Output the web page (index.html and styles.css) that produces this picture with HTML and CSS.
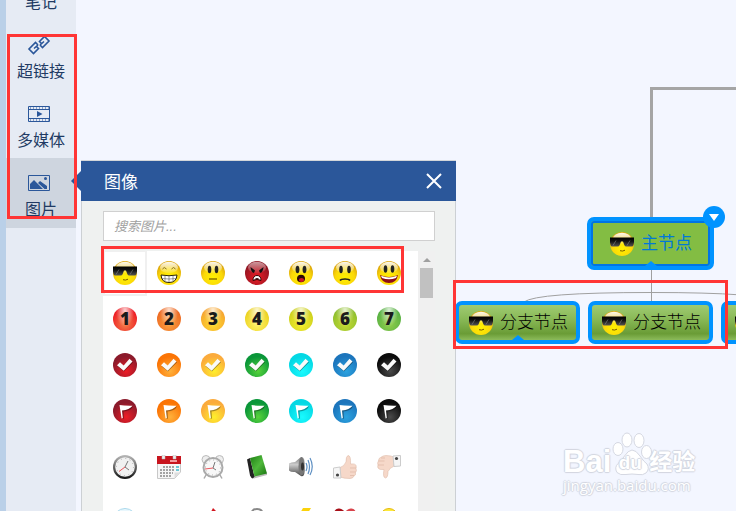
FILE: index.html
```html
<!DOCTYPE html>
<html lang="zh-CN">
<head>
  <meta charset="UTF-8">
  <title>思维导图 - 图像</title>
  <link rel="stylesheet" href="styles.css">
</head>
<body>
  <!-- shared icons -->
  <svg class="defs" aria-hidden="true">
    <defs>
      <radialGradient id="yellow" cx="50%" cy="68%" r="60%">
        <stop offset="0" stop-color="#fff200"/>
        <stop offset="0.65" stop-color="#fbd808"/>
        <stop offset="1" stop-color="#dda80e"/>
      </radialGradient>
      <radialGradient id="red" cx="50%" cy="68%" r="60%">
        <stop offset="0" stop-color="#ee1c25"/>
        <stop offset="1" stop-color="#8e1522"/>
      </radialGradient>
      <linearGradient id="shine" x1="0" y1="0" x2="0" y2="1">
        <stop offset="0" stop-color="#fff" stop-opacity="0.95"/>
        <stop offset="1" stop-color="#fff" stop-opacity="0.1"/>
      </linearGradient>
      <linearGradient id="lens" x1="0" y1="0" x2="0" y2="1">
        <stop offset="0" stop-color="#000"/>
        <stop offset="0.4" stop-color="#111"/>
        <stop offset="1" stop-color="#555"/>
      </linearGradient>
      <linearGradient id="rim" x1="0" y1="0" x2="0" y2="1">
        <stop offset="0" stop-color="#bbb"/>
        <stop offset="0.5" stop-color="#666"/>
        <stop offset="1" stop-color="#111"/>
      </linearGradient>
      <linearGradient id="cover" x1="0" y1="0" x2="1" y2="1">
        <stop offset="0" stop-color="#1c7d12"/>
        <stop offset="0.5" stop-color="#4fb93b"/>
        <stop offset="1" stop-color="#17700f"/>
      </linearGradient>
      <linearGradient id="metal" x1="0" y1="0" x2="0" y2="1">
        <stop offset="0" stop-color="#777"/>
        <stop offset="0.4" stop-color="#ccc"/>
        <stop offset="1" stop-color="#444"/>
      </linearGradient>
      <symbol id="face" viewBox="0 0 24 24">
        <circle cx="12" cy="12" r="12" fill="url(#yellow)"/>
        <ellipse cx="12" cy="6.5" rx="9" ry="5.8" fill="url(#shine)"/>
      </symbol>
      <symbol id="cool" viewBox="0 0 24 24">
        <use href="#face"/>
        <path d="M0 5.500h24v5l-.5 2.500q-.3 1.500-2 1.500h-5q-1.700 0-2.200-1.500L13 9.500h-2L9.700 13q-.5 1.500-2.200 1.500h-5q-1.700 0-2-1.500L0 10.500z" fill="url(#lens)"/>
        <path d="M3 13.500l3-5M17 13.500l3-5" stroke="#999" stroke-width="1" opacity=".5"/>
        <path d="M10 18.700q2.500 1 5-.5" fill="none" stroke="#7a5c00" stroke-width="1"/>
      </symbol>
      <symbol id="grin" viewBox="0 0 24 24">
        <use href="#face"/>
        <path d="M5.500 8q1.500-3 4 0M14.500 8q2-3 4 0" fill="none" stroke="#8a7020" stroke-width="1"/>
        <path d="M4 14q8 1.500 16 0-.5 7.500-8 7.500T4 14z" fill="#fff" stroke="#2a2305"/>
        <path d="M4.500 17.500q7.500 1 15 0M8 14.500v6M12 15v6M16 14.500v6" fill="none" stroke="#555" stroke-width=".6"/>
      </symbol>
      <symbol id="flat" viewBox="0 0 24 24">
        <use href="#face"/>
        <ellipse cx="8.500" cy="8.500" rx="1.800" ry="3.800" fill="#222"/>
        <ellipse cx="15.500" cy="8.500" rx="1.800" ry="3.800" fill="#222"/>
        <path d="M8 18h8" stroke="#6e5700" stroke-width="1.200"/>
      </symbol>
      <symbol id="angry" viewBox="0 0 24 24">
        <circle cx="12" cy="12" r="12" fill="url(#red)"/>
        <ellipse cx="12" cy="6.500" rx="9" ry="5.800" fill="url(#shine)" opacity=".6"/>
        <path d="M5.500 6l4.500 3.500-1 2.500q-3-.5-3.500-6zM18.500 6L14 9.500l1 2.500q3-.5 3.500-6z" fill="#111"/>
        <path d="M8 19.500q0-5 4-5t4 5q-4-2-8 0z" fill="#fff" stroke="#300" stroke-width="1"/>
        <path d="M9 18.500q3-3 6 0" fill="#300"/>
      </symbol>
      <symbol id="shock" viewBox="0 0 24 24">
        <use href="#face"/>
        <ellipse cx="8.500" cy="8.500" rx="1.900" ry="3.800" fill="#222"/>
        <ellipse cx="15.500" cy="8.500" rx="1.900" ry="3.800" fill="#222"/>
        <ellipse cx="12" cy="17.500" rx="4" ry="3.800" fill="#2b0a05"/>
        <ellipse cx="12.500" cy="19" rx="2.600" ry="2" fill="#d01725"/>
      </symbol>
      <symbol id="sad" viewBox="0 0 24 24">
        <use href="#face"/>
        <ellipse cx="8" cy="8.500" rx="1.800" ry="3.800" fill="#222"/>
        <ellipse cx="16" cy="8.500" rx="1.800" ry="3.800" fill="#222"/>
        <path d="M7 19.500q1-1.500 5-1.500t5 1.500" fill="none" stroke="#222" stroke-width="1.500"/>
      </symbol>
      <symbol id="happy" viewBox="0 0 24 24">
        <use href="#face"/>
        <ellipse cx="8.500" cy="8" rx="1.800" ry="3.800" fill="#222"/>
        <ellipse cx="15.500" cy="8" rx="1.800" ry="3.800" fill="#222"/>
        <path d="M3 14q9 4 18 0-1.500 8-9 8t-9-8z" fill="#8c0e18"/>
        <path d="M4 14.800q8 3.500 16 0l-1 2.200q-7 2.500-14 0z" fill="#fff"/>
      </symbol>
      <symbol id="check" viewBox="0 0 24 24">
        <path d="M4.500 13.200l3-3.200 3.500 3.300L17 6.500l3 2.800-9 9.200z" fill="#000" opacity=".35"/>
        <path d="M4 12.200l3-3 3.700 3.300 5.800-6.800 3 2.800-8.800 9.200z" fill="#fafafa"/>
      </symbol>
      <symbol id="flag" viewBox="0 0 24 24">
        <path d="M7.500 7q5 1.500 12.500.5-2.500 4.500-9.500 5l.5 7-1.200.5z" fill="#000" opacity=".35"/>
        <path d="M6.500 6q5 1 13 .8-3 4.200-10.500 4.700l.8 7.500-1.200.5z" fill="#fff"/>
      </symbol>
    </defs>
  </svg>

  <div class="app">
    <nav class="sidebar">
      <button class="tool">
        <svg width="24" height="24" viewBox="0 0 24 24"><path d="M5 3h14v18H5zM8 8h8M8 12h8" fill="none" stroke="currentColor"/></svg>
        <span>笔记</span>
      </button>
      <button class="tool">
        <svg width="24" height="24" viewBox="0 0 24 24" fill="none" stroke="currentColor" stroke-width="1.600">
          <path d="M11 12L8.500 9.500 2 16l4.500 4.500 5-5-2-2"/>
          <path d="M13 12l2.500 2.500L22 8l-4.500-4.500-5 5 2 2"/>
          <path d="M7 15.500l4-3.500M13 12l4-3.500"/>
        </svg>
        <span>超链接</span>
      </button>
      <button class="tool">
        <svg width="24" height="24" viewBox="0 0 24 24" fill="none" stroke="currentColor">
          <path d="M1.500 4.500h21v15h-21zM1 7.500h22M1 16.500h22"/>
          <path d="M3 6h19M3 18h19" stroke-dasharray="1 2"/>
          <path d="M10 9l5.500 3-5.500 3z" fill="currentColor" stroke="none"/>
        </svg>
        <span>多媒体</span>
      </button>
      <button class="tool active">
        <svg width="24" height="24" viewBox="0 0 24 24">
          <path d="M1.500 4.500h21v15h-21z" fill="none" stroke="currentColor"/>
          <path d="M3 18v-5l4-4 9 9zM11 12l2-2 7 5v3h-2.500z" fill="currentColor"/>
          <circle cx="18.500" cy="7.500" r="1.500" fill="currentColor"/>
        </svg>
        <span>图片</span>
      </button>
    </nav>

    <main class="canvas">
      <svg class="links" width="700" height="511" fill="none">
        <path d="M575.500 217V88.500H700" stroke="#a5a5a5" stroke-width="3"/>
        <path d="M575.500 268v34" stroke="#a0a0a0"/>
        <path d="M448 302Q460 292.500 575 292.500T700 302" stroke="#a0a0a0"/>
      </svg>

      <div class="node main-node">
        <svg class="face"><use href="#cool"/></svg>
        <span>主节点</span>
        <button class="toggle" aria-label="折叠"></button>
      </div>
      <div class="node branch branch-1 open">
        <svg class="face"><use href="#cool"/></svg>
        <span>分支节点</span>
      </div>
      <div class="node branch branch-2">
        <svg class="face"><use href="#cool"/></svg>
        <span>分支节点</span>
      </div>
      <div class="node branch branch-3">
        <svg class="face"><use href="#cool"/></svg>
      </div>

      <section class="panel">
        <header class="panel-header">
          <h2>图像</h2>
          <button class="close" aria-label="关闭">
            <svg width="16" height="16" viewBox="0 0 16 16"><path d="M1 1l14 14M15 1L1 15" stroke="#fff" stroke-width="2"/></svg>
          </button>
        </header>
        <div class="panel-body">
          <input type="text" class="search" placeholder="搜索图片..." aria-label="搜索图片">
          <div class="list">
            <div class="groups">
              <div class="group">
                <button class="cell selected" aria-label="墨镜"><svg class="face"><use href="#cool"/></svg></button>
                <button class="cell" aria-label="大笑"><svg class="face"><use href="#grin"/></svg></button>
                <button class="cell" aria-label="平静"><svg class="face"><use href="#flat"/></svg></button>
                <button class="cell" aria-label="生气"><svg class="face"><use href="#angry"/></svg></button>
                <button class="cell" aria-label="惊讶"><svg class="face"><use href="#shock"/></svg></button>
                <button class="cell" aria-label="难过"><svg class="face"><use href="#sad"/></svg></button>
                <button class="cell" aria-label="开心"><svg class="face"><use href="#happy"/></svg></button>

                <button class="cell"><span class="ball number n1">1</span></button>
                <button class="cell"><span class="ball number n2">2</span></button>
                <button class="cell"><span class="ball number n3">3</span></button>
                <button class="cell"><span class="ball number n4">4</span></button>
                <button class="cell"><span class="ball number n5">5</span></button>
                <button class="cell"><span class="ball number n6">6</span></button>
                <button class="cell"><span class="ball number n7">7</span></button>

                <button class="cell" aria-label="完成 红"><span class="ball crimson"><svg class="face"><use href="#check"/></svg></span></button>
                <button class="cell" aria-label="完成 橙"><span class="ball orange"><svg class="face"><use href="#check"/></svg></span></button>
                <button class="cell" aria-label="完成 黄"><span class="ball amber"><svg class="face"><use href="#check"/></svg></span></button>
                <button class="cell" aria-label="完成 绿"><span class="ball green"><svg class="face"><use href="#check"/></svg></span></button>
                <button class="cell" aria-label="完成 青"><span class="ball cyan"><svg class="face"><use href="#check"/></svg></span></button>
                <button class="cell" aria-label="完成 蓝"><span class="ball blue"><svg class="face"><use href="#check"/></svg></span></button>
                <button class="cell" aria-label="完成 黑"><span class="ball black"><svg class="face"><use href="#check"/></svg></span></button>

                <button class="cell" aria-label="旗帜 红"><span class="ball crimson"><svg class="face"><use href="#flag"/></svg></span></button>
                <button class="cell" aria-label="旗帜 橙"><span class="ball orange"><svg class="face"><use href="#flag"/></svg></span></button>
                <button class="cell" aria-label="旗帜 黄"><span class="ball amber"><svg class="face"><use href="#flag"/></svg></span></button>
                <button class="cell" aria-label="旗帜 绿"><span class="ball green"><svg class="face"><use href="#flag"/></svg></span></button>
                <button class="cell" aria-label="旗帜 青"><span class="ball cyan"><svg class="face"><use href="#flag"/></svg></span></button>
                <button class="cell" aria-label="旗帜 蓝"><span class="ball blue"><svg class="face"><use href="#flag"/></svg></span></button>
                <button class="cell" aria-label="旗帜 黑"><span class="ball black"><svg class="face"><use href="#flag"/></svg></span></button>
              </div>

              <div class="group">
                <button class="cell" aria-label="时钟">
                  <svg class="face" viewBox="0 0 24 24">
                    <circle cx="12" cy="12" r="12" fill="url(#rim)"/>
                    <circle cx="12" cy="12" r="9.800" fill="#f1f1f1"/>
                    <circle cx="12" cy="12" r="8.500" fill="none" stroke="#aaa" stroke-width="1" stroke-dasharray="1 3.450"/>
                    <path d="M15 6l-3 6 4 3" fill="none" stroke="#777"/>
                    <path d="M12 12l-6 4.500" stroke="#e8545a"/>
                  </svg>
                </button>
                <button class="cell" aria-label="日历">
                  <svg class="face" viewBox="0 0 24 24">
                    <path d="M.5 8h23v9l-6 6.500H.5z" fill="#f6f6f6" stroke="#c8c8c8"/>
                    <path d="M0 1h24v8H0z" fill="#c8151e"/>
                    <path d="M13 6h7" stroke="#f29a9e" stroke-width="2"/>
                    <path d="M5 0h3v4H5zM16 0h3v4h-3z" fill="#eee" stroke="#bbb" stroke-width=".5"/>
                    <path d="M6 12h12M3 15h15M3 18h13M3 21h11" stroke="#888" stroke-width="1.500" stroke-dasharray="2 1"/>
                    <path d="M19 12h3M19 15h3" stroke="#3fb9cb" stroke-width="1.500"/>
                    <path d="M17.500 23v-5.500H23z" fill="#ddd"/>
                  </svg>
                </button>
                <button class="cell" aria-label="闹钟">
                  <svg class="face" viewBox="0 0 24 24">
                    <path d="M5 20l-2 3.500M19 20l2 3.500" stroke="#aaa" stroke-width="1.500"/>
                    <circle cx="5" cy="4.500" r="4" fill="#eee" stroke="#bbb"/>
                    <circle cx="18.500" cy="4.500" r="4" fill="#eee" stroke="#bbb"/>
                    <circle cx="12" cy="12.500" r="9.500" fill="#f8f8f8" stroke="#aaa" stroke-width="2"/>
                    <circle cx="12" cy="12.500" r="7.500" fill="none" stroke="#aaa" stroke-dasharray="1 2.900"/>
                    <path d="M14 7l-2 6 3 2" fill="none" stroke="#777"/>
                    <path d="M12 13l-8 1" stroke="#ea5a60"/>
                  </svg>
                </button>
                <button class="cell" aria-label="书">
                  <svg class="face" viewBox="0 0 24 24">
                    <path d="M2 5l5 16 2 2.500L22 20v-2L8 20z" fill="#bcbcbc"/>
                    <path d="M2 4.500l3-1.500 4.500 18.500-1.500 2q-2-.5-3-3z" fill="#222"/>
                    <path d="M5 3l11.500-3L22 18.500 9.500 21.500z" fill="url(#cover)"/>
                  </svg>
                </button>
                <button class="cell" aria-label="喇叭">
                  <svg class="face" viewBox="0 0 24 24">
                    <path d="M0 8.500q2-1.500 6-1.500l6-5q4-1 4 10t-4 9l-6-4q-4 .5-6-1.500z" fill="url(#metal)"/>
                    <ellipse cx="12.500" cy="11.500" rx="3" ry="9" fill="#777"/>
                    <ellipse cx="13.500" cy="11.500" rx="1.500" ry="4" fill="#333"/>
                    <path d="M17 8q2 4 0 8M19 5q3 7 0 14M21 3q4.500 8.500 0 17" fill="none" stroke="#5d8fc2" stroke-width="1.200"/>
                  </svg>
                </button>
                <button class="cell" aria-label="赞">
                  <svg class="face" viewBox="0 0 24 24">
                    <path d="M7 12.500q4-1 6-5.500 0-6 2-6.500 3 0 2.500 8.500 5-.5 5.500 1.500t0 3q1 2-.5 4 .5 3-1.500 3.500-1 2.500-4 2.500-6 0-10-1.500z" fill="#f6d8c9" stroke="#dfbaa8" stroke-width=".6"/>
                    <path d="M17 13h6M17 17h5.500M17 20.500h4" stroke="#deb7a5" stroke-width=".7"/>
                    <path d="M.5 13L7 12l1 11H.5z" fill="#f6f6f6" stroke="#ccc"/>
                    <circle cx="4.500" cy="20" r="1.600" fill="#444"/>
                  </svg>
                </button>
                <button class="cell" aria-label="踩">
                  <svg class="face" viewBox="0 0 24 24">
                    <path d="M16.500 11.500q-3.500 1-5.500 5 0 6-2.500 6.500-3-.5-1.500-8.500-5 .5-6-1.500-.5-1.500 0-3-1-2 .5-4 0-3 2-3.500Q6 .5 9 .5q4.500 0 8 1.500z" fill="#f6d8c9" stroke="#dfbaa8" stroke-width=".6"/>
                    <path d="M1 10h6M1.500 6h6M4 3h4" stroke="#deb7a5" stroke-width=".7"/>
                    <path d="M16 1l7.500-.5V11L17 11.500z" fill="#f6f6f6" stroke="#ccc"/>
                    <circle cx="19.500" cy="3.500" r="1.600" fill="#444"/>
                  </svg>
                </button>
              </div>

              <div class="group last">
                <button class="cell" aria-label="地球"><svg class="face" viewBox="0 0 24 24"><circle cx="12" cy="12" r="11.500" fill="#e9f7fd" stroke="#a9d8ec"/></svg></button>
                <button class="cell" aria-label="空白"></button>
                <button class="cell" aria-label="铅笔"><svg class="face" viewBox="0 0 24 24"><path d="M12 0l5 5-12 18-4 1 1-5z" fill="#d2151f"/></svg></button>
                <button class="cell" aria-label="锁"><svg class="face" viewBox="0 0 24 24"><path d="M6.500 12V6q0-5 5.500-5t5.500 5v6" fill="none" stroke="#888" stroke-width="2"/></svg></button>
                <button class="cell" aria-label="闪电"><svg class="face" viewBox="0 0 24 24"><path d="M14 0h8l-5 8h5L6 24l5-12H7z" fill="#fbd20b"/></svg></button>
                <button class="cell" aria-label="爱心"><svg class="face" viewBox="0 0 24 24"><path d="M12 4Q9 0 5.500.5 1 1 1 6q1 8 11 16z" fill="#a70f18"/><path d="M12 4q3-4 6.500-3.500Q23 1 23 6q-1 8-11 16z" fill="#d8434b"/></svg></button>
                <button class="cell" aria-label="灯泡"><svg class="face" viewBox="0 0 24 24"><circle cx="12" cy="9" r="8.500" fill="#fdea3c" stroke="#e5b90d"/></svg></button>
              </div>
            </div>
            <div class="scrollbar">
              <div class="up"></div>
              <div class="thumb"></div>
            </div>
          </div>
        </div>
      </section>

      <div class="watermark">
        <div class="brand">
          <span class="bai">Bai</span>
          <span class="paw">
            <svg width="42" height="44" viewBox="0 0 42 44" fill="#fff" stroke="#d5d8e2">
              <ellipse cx="7" cy="17" rx="5" ry="6.500"/>
              <ellipse cx="16" cy="8" rx="5" ry="7"/>
              <ellipse cx="28" cy="8.500" rx="5" ry="7"/>
              <ellipse cx="35.500" cy="20" rx="5" ry="6.500"/>
              <path d="M21 18q4 0 8 6t7 8q3 5-1 9-3 2.500-8 1.500-6-1-12 0-6 1-9-2-3-5 1-9 3-2 6.500-7.500T21 18z"/>
            </svg>
            <span>du</span>
          </span>
          <span class="cn">经验</span>
        </div>
        <div class="url">jingyan.baidu.com</div>
      </div>
    </main>

    <!-- highlighted areas -->
    <div class="mark mark-tools"></div>
    <div class="mark mark-faces"></div>
    <div class="mark mark-nodes"></div>
  </div>
</body>
</html>
```

FILE: styles.css
```css
* {
  box-sizing: border-box;
}
body {
  margin: 0;
  overflow: hidden;
  font-family: "Liberation Sans", "Noto Sans CJK SC", sans-serif;
  font-size: 16px;
}
button {
  margin: 0;
  padding: 0;
  border: none;
  background: none;
  font-family: inherit;
  font-size: inherit;
  color: inherit;
  cursor: pointer;
}
svg {
  display: block;
}
.defs {
  position: absolute;
  width: 0;
  height: 0;
}
.app {
  position: relative;
  display: flex;
  height: 100vh;
  overflow: hidden;
}

/* left toolbar, scrolled a little */
.sidebar {
  width: 76px;
  flex-shrink: 0;
  border-left: 6px solid #bad0e8;
  background: #e6ebf4;
  display: flex;
  flex-direction: column;
  justify-content: flex-start;
}
.tool {
  height: 69px;
  flex-shrink: 0;
  display: flex;
  flex-direction: column;
  align-items: center;
  padding-top: 13px;
  gap: 3px;
  line-height: 24px;
  color: #2b579a;
}
.tool:first-child {
  margin-top: -49px;
}
.tool svg {
  margin-right: 4px;
}
.tool span {
  color: #213a63;
}
.tool.active {
  height: 70px;
  background: #ced5df;
}

.canvas {
  position: relative;
  flex: 1;
  overflow: visible;
  background: #f3f6ff;
}
.links {
  position: absolute;
  left: 0;
  top: 0;
}

/* nodes */
.face {
  width: 24px;
  height: 24px;
  flex-shrink: 0;
}
.node {
  position: absolute;
  display: flex;
  align-items: center;
  gap: 7px;
  border: 4px solid #0093ff;
  border-radius: 7px;
  font-size: 17px;
  font-weight: 300;
  line-height: 24px;
  white-space: nowrap;
}
.main-node {
  left: 511px;
  top: 217px;
  width: 127px;
  height: 53px;
  padding-left: 19px;
  background: #83bd43;
  box-shadow: inset 0 0 0 2px #0074e4;
  color: #0078d8;
  font-weight: 400;
}
.branch {
  top: 301px;
  width: 125px;
  height: 43px;
  padding-left: 10px;
  background: linear-gradient(#9fcb72, #89b957 40%, #6a9c36 82%, #8cbb5b);
  color: #000;
}
.branch-1 {
  left: 379px;
}
.branch-2 {
  left: 512px;
}
.branch-3 {
  left: 645px;
}
.main-node::after,
.open::after {
  content: "";
  position: absolute;
  left: 50%;
  bottom: 0;
  margin-left: -6px;
  border: 6px solid transparent;
  border-top: none;
  border-bottom: 5px solid #0093ff;
}
.toggle {
  position: absolute;
  right: -15px;
  top: -15px;
  width: 22px;
  height: 22px;
  border-radius: 50%;
  background: #0093ff;
  display: flex;
  align-items: center;
  justify-content: center;
}
.toggle::after {
  content: "";
  border: 5px solid transparent;
  border-top: 7px solid #fff;
  border-bottom: none;
}

/* image panel */
.panel {
  position: absolute;
  left: 5px;
  top: 160px;
  bottom: 0;
  width: 375px;
  display: flex;
  flex-direction: column;
  border-top: 1px solid #d3d6da;
}
.panel-header {
  position: relative;
  height: 40px;
  flex-shrink: 0;
  display: flex;
  align-items: center;
  justify-content: space-between;
  padding: 0 14px 1px 23px;
  background: #2b579a;
  color: #fff;
}
.panel-header::before {
  content: "";
  position: absolute;
  left: -10px;
  top: 10px;
  border: 10px solid transparent;
  border-left: none;
  border-right-color: #2b579a;
}
.panel-header h2 {
  margin: 0;
  font-size: 17px;
  font-weight: 400;
}
.panel-body {
  flex: 1;
  min-height: 0;
  display: flex;
  flex-direction: column;
  gap: 10px;
  padding: 10px 20px 0 21px;
  border: 1px solid #ccd0d4;
  border-width: 0 1px;
  background: #eff1f0;
}
.search {
  width: 100%;
  height: 30px;
  flex-shrink: 0;
  padding: 0 10px;
  border: 1px solid #d0d0d0;
  background: #fff;
  font-family: inherit;
  font-size: 13px;
  font-style: italic;
}
.search::placeholder {
  color: #a0a0a0;
}
.list {
  flex: 1;
  min-height: 0;
  display: flex;
  overflow: hidden;
}
.groups {
  flex: 1;
  background: #fff;
}
.group {
  display: grid;
  grid-template-columns: repeat(7, 44px);
  grid-auto-rows: 46px;
  margin-bottom: 11px;
  margin-top: -1px;
}
.group.last {
  margin-top: -4px;
}
.cell {
  display: flex;
  align-items: center;
  justify-content: center;
}
.cell.selected {
  border: 2px solid #f0f0f0;
}

/* round badges */
.ball {
  width: 24px;
  height: 24px;
  border-radius: 50%;
  display: block;
}
.number {
  font-family: "Open Sans", "Liberation Sans", sans-serif;
  font-size: 17px;
  font-weight: 800;
  line-height: 24px;
  text-align: center;
  color: #1b1b1b;
}
.n1 {
  background: radial-gradient(ellipse at 50% 15%, #fffc, #fff0 55%), radial-gradient(circle at 50% 70%, #f4824a, #ed1c24 70%);
}
.n2 {
  background: radial-gradient(ellipse at 50% 15%, #fffc, #fff0 55%), radial-gradient(circle at 50% 70%, #fba33f, #ee6a23 70%);
}
.n3 {
  background: radial-gradient(ellipse at 50% 15%, #fffc, #fff0 55%), radial-gradient(circle at 50% 70%, #ffe02f, #f6a52f 70%);
}
.n4 {
  background: radial-gradient(ellipse at 50% 15%, #fffc, #fff0 55%), radial-gradient(circle at 50% 70%, #fff36b, #ecd21f 70%);
}
.n5 {
  background: radial-gradient(ellipse at 50% 15%, #fffc, #fff0 55%), radial-gradient(circle at 50% 70%, #f8ef2c, #cdd11f 70%);
}
.n6 {
  background: radial-gradient(ellipse at 50% 15%, #fffc, #fff0 55%), radial-gradient(circle at 50% 70%, #c8dc33, #8fbf2f 70%);
}
.n7 {
  background: radial-gradient(ellipse at 50% 15%, #fffc, #fff0 55%), radial-gradient(circle at 50% 70%, #93cf4c, #58b144 70%);
}
.crimson {
  background: radial-gradient(circle at 55% 75%, #ee1c25, #8b1a2b 65%);
}
.orange {
  background: radial-gradient(circle at 55% 75%, #ffb13b, #fb7405 65%);
}
.amber {
  background: radial-gradient(circle at 55% 75%, #fff02b, #fbab3c 65%);
}
.green {
  background: radial-gradient(circle at 55% 75%, #57d33b, #0a9639 65%);
}
.cyan {
  background: radial-gradient(circle at 55% 75%, #19fbff, #04d8e4 65%);
}
.blue {
  background: radial-gradient(circle at 55% 75%, #2ba3e0, #1c75bc 65%);
}
.black {
  background: radial-gradient(circle at 55% 75%, #4a4a4a, #0b0b0b 65%);
}

.scrollbar {
  width: 17px;
  padding: 7px 2px 0;
  display: flex;
  flex-direction: column;
  align-items: center;
  gap: 6px;
  background: #f0f0f0;
}
.up {
  border: 4px solid transparent;
  border-top: none;
  border-bottom-color: #a0a0a0;
}
.thumb {
  width: 13px;
  height: 30px;
  background: #c1c1c1;
}

/* watermark */
.watermark {
  position: absolute;
  left: 487px;
  top: 432px;
  color: #fff;
  text-shadow: 1px 0 1px #d2d6e0, -1px 0 1px #d2d6e0, 0 1px 1px #d2d6e0, 0 -1px 1px #d2d6e0;
  white-space: nowrap;
}
.brand {
  display: flex;
  align-items: flex-end;
  height: 44px;
}
.bai {
  font-size: 31px;
  font-weight: 700;
  line-height: 28px;
}
.paw {
  position: relative;
  width: 38px;
}
.paw span {
  position: absolute;
  left: 0;
  right: 0;
  bottom: 3px;
  text-align: center;
  font-size: 19px;
  font-weight: 700;
  line-height: 20px;
}
.cn {
  font-size: 23px;
  font-weight: 700;
  line-height: 28px;
}
.url {
  font-family: "Open Sans", sans-serif;
  font-size: 15px;
  line-height: 18px;
}

/* red frames */
.mark {
  position: absolute;
  border: 3px solid #ff3535;
  pointer-events: none;
}
.mark-tools {
  left: 7px;
  top: 34px;
  width: 70px;
  height: 185px;
}
.mark-faces {
  left: 101px;
  top: 246px;
  width: 303px;
  height: 47px;
}
.mark-nodes {
  left: 453px;
  top: 280px;
  width: 275px;
  height: 69px;
}
```
